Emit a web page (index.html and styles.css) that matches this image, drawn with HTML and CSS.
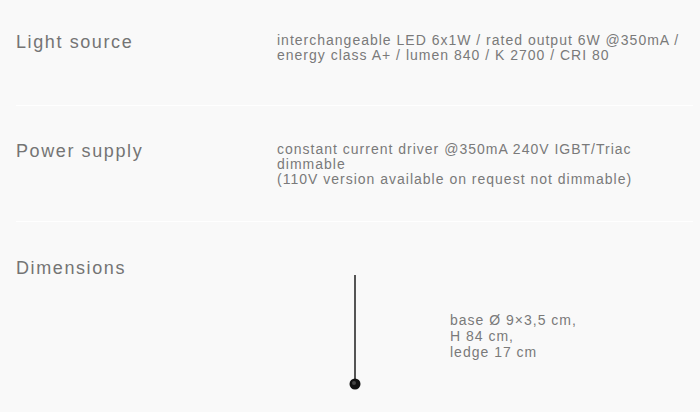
FILE: index.html
```html
<!DOCTYPE html>
<html>
<head>
<meta charset="utf-8">
<link rel="stylesheet" href="styles.css">
</head>
<body>
<div class="specs">
  <div class="row row-first">
    <div class="label">Light source</div>
    <div class="value">interchangeable LED 6x1W / rated output 6W @350mA /<br>energy class A+ / lumen 840 / K 2700 / CRI 80</div>
  </div>
  <div class="row">
    <div class="label">Power supply</div>
    <div class="value">constant current driver @350mA 240V IGBT/Triac<br>dimmable<br>(110V version available on request not dimmable)</div>
  </div>
  <div class="row row-last">
    <div class="label">Dimensions</div>
    <div class="dims">
      <div class="lamp">
        <svg width="14" height="120" viewBox="0 0 14 120">
          <rect x="6" y="0" width="2" height="106" fill="#555"/>
          <circle cx="7" cy="109" r="5.5" fill="#111"/>
          <circle cx="6" cy="108" r="2" fill="#444"/>
        </svg>
      </div>
      <div class="dim-text">base Ø 9×3,5 cm,<br>H 84 cm,<br>ledge 17 cm</div>
    </div>
  </div>
</div>
</body>
</html>
```
FILE: styles.css
```css
html, body {
  margin: 0;
  padding: 0;
  background: #f9f9f9;
}
body {
  font-family: "Liberation Sans", Arial, sans-serif;
  color: #777;
  height: 412px;
  overflow: hidden;
}
.specs {
  margin-left: 16px;
  width: 677px;
}
.row {
  display: flex;
  padding-top: 34px;
  height: 81px;
  border-bottom: 1px solid #ffffff;
}
.row-first {
  padding-top: 31px;
  height: 74px;
}
.row-last {
  padding-top: 35px;
  border-bottom: none;
  height: auto;
}
.label {
  width: 261px;
  flex: none;
  font-size: 18px;
  line-height: 22px;
  letter-spacing: 1.6px;
  color: #747474;
}
.value {
  font-size: 14px;
  line-height: 15px;
  letter-spacing: 1px;
  padding-top: 2px;
  color: #7a7a7a;
}
.dims {
  display: flex;
  align-items: flex-start;
}
.lamp {
  margin-left: 71px;
  margin-top: 18px;
  line-height: 0;
}
.dim-text {
  margin-left: 88px;
  margin-top: 55px;
  font-size: 14px;
  line-height: 16px;
  letter-spacing: 1px;
  color: #7a7a7a;
}
```
